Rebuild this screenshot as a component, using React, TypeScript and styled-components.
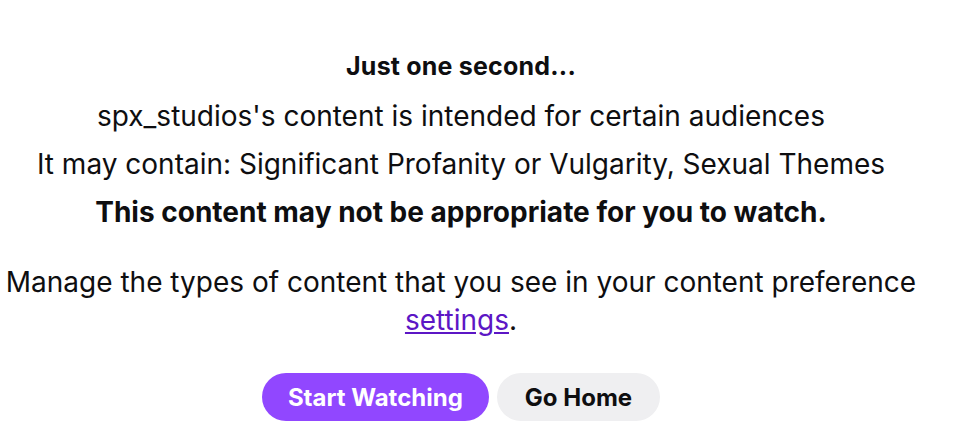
import styled, { createGlobalStyle } from "styled-components";

const GlobalStyle = createGlobalStyle`
	html, body {
		margin: 0;
		padding: 0;
		background: #ffffff;
	}
	body {
		font-family: Inter, "Noto Sans", "Liberation Sans", sans-serif;
		color: #0e0e10;
	}
`;

const Gate = styled.main`
	display: flex;
	flex-direction: column;
	align-items: center;
	text-align: center;
	width: 922px;
	padding-top: 48px;
`;

const Title = styled.h2`
	margin: 0 0 13px;
	font-size: 25px;
	line-height: 36px;
	font-weight: 700;
	letter-spacing: 0.2px;
`;

const Line = styled.p<{ $strong?: boolean }>`
	margin: 0 0 10px;
	font-size: 28px;
	line-height: 38px;
	font-weight: ${(p) => (p.$strong ? 700 : 400)};
`;

const Preference = styled.p`
	margin: 22px 0 0;
	font-size: 28px;
	line-height: 38px;
`;

const Link = styled.a`
	color: #5c16c5;
	text-decoration: underline;
`;

const Actions = styled.div`
	display: flex;
	gap: 8px;
	margin-top: 34px;
`;

const Button = styled.button<{ $primary?: boolean }>`
	border: none;
	border-radius: 24px;
	height: 48px;
	padding: 0 ${(p) => (p.$primary ? "26px" : "28px")};
	font-family: inherit;
	font-size: 24px;
	font-weight: 700;
	cursor: pointer;
	background: ${(p) => (p.$primary ? "#9147ff" : "#efeff1")};
	color: ${(p) => (p.$primary ? "#ffffff" : "#0e0e10")};
`;

export default function App() {
	return (
		<>
			<GlobalStyle />
			<Gate>
				<Title>Just one second...</Title>
				<Line>spx_studios's content is intended for certain audiences</Line>
				<Line>
					It may contain: Significant Profanity or Vulgarity, Sexual Themes
				</Line>
				<Line $strong>This content may not be appropriate for you to watch.</Line>
				<Preference>
					Manage the types of content that you see in your content preference{" "}
					<Link href="#">settings</Link>.
				</Preference>
				<Actions>
					<Button $primary>Start Watching</Button>
					<Button>Go Home</Button>
				</Actions>
			</Gate>
		</>
	);
}
